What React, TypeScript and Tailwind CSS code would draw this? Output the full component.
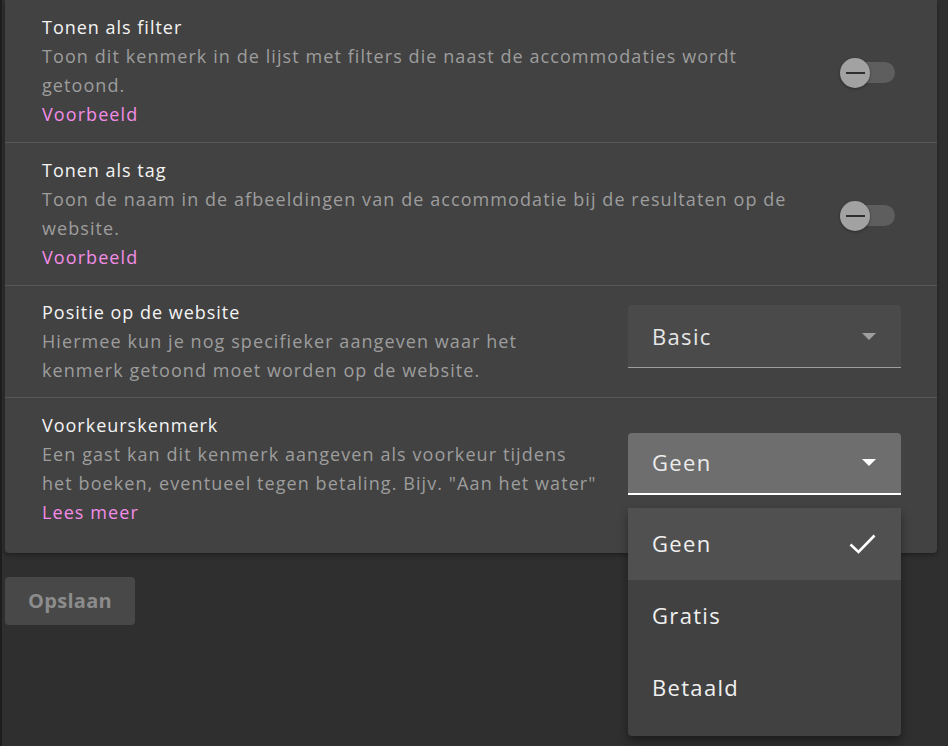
import { useState } from 'react';

const FONT = "font-['Open_Sans',sans-serif]";

function Toggle() {
  return (
    <div className="relative h-[30px] w-[55px] shrink-0">
      <div className="absolute right-0 top-[4px] h-[21px] w-[50px] rounded-full bg-[#5e5e5e]" />
      <div className="absolute left-0 top-0 flex h-[30px] w-[30px] items-center justify-center rounded-full bg-[#a2a2a2] shadow-[0_1px_3px_rgba(0,0,0,0.35)]">
        <div className="h-[2px] w-[19px] bg-[#2e2e2e]" />
      </div>
    </div>
  );
}

function Arrow({ light }: { light?: boolean }) {
  return (
    <svg width="14" height="7" viewBox="0 0 14 7" className="shrink-0">
      <path d="M0 0 L14 0 L7 7 Z" fill={light ? '#ffffff' : '#9e9e9e'} />
    </svg>
  );
}

function Row({
  title,
  lines,
  link,
  children,
  last,
  tight,
}: {
  title: string;
  lines: string[];
  link?: string;
  children: React.ReactNode;
  last?: boolean;
  tight?: boolean;
}) {
  return (
    <div
      className={`flex items-center pl-[37px] pr-[36px] ${tight ? 'pt-[12px] pb-[12px]' : 'py-[13px]'} ${last ? '' : 'border-b border-[#575757]'}`}
    >
      <div className="flex-1 text-[18px] leading-[29px] tracking-[0.06em]">
        <div className="font-medium tracking-[0.055em] text-[#f4f4f4]">{title}</div>
        <div className="text-[#9d9d9d]">
          {lines.map((l, i) => (
            <span key={i}>
              {l}
              {i < lines.length - 1 && <br />}
            </span>
          ))}
        </div>
        {link && <div className="text-[#f28ce6]">{link}</div>}
      </div>
      {children}
    </div>
  );
}

export default function App() {
  const [value] = useState('Geen');
  const options = ['Geen', 'Gratis', 'Betaald'];

  return (
    <div className={`h-[746px] w-[948px] overflow-hidden border-l-2 border-[#1d1d1d] bg-[#2f2f2f] pl-[3px] ${FONT}`}>
      <div className="w-[932px] rounded-b-[4px] bg-[#424242] pb-[13px] shadow-[0_2px_4px_rgba(0,0,0,0.35)]">
        <Row
          title="Tonen als filter"
          lines={['Toon dit kenmerk in de lijst met filters die naast de accommodaties wordt', 'getoond.']}
          link="Voorbeeld"
        >
          <div className="mr-[6px] mt-[3px]">
            <Toggle />
          </div>
        </Row>
        <Row
          title="Tonen als tag"
          lines={['Toon de naam in de afbeeldingen van de accommodatie bij de resultaten op de', 'website.']}
          link="Voorbeeld"
        >
          <div className="mr-[6px] mt-[3px]">
            <Toggle />
          </div>
        </Row>
        <Row
          title="Positie op de website"
          lines={['Hiermee kun je nog specifieker aangeven waar het', 'kenmerk getoond moet worden op de website.']}
          tight
        >
          <div className="mb-[10px] flex h-[63px] w-[273px] items-center justify-between rounded-t-[4px] border-b border-[#9e9e9e] bg-[#4a4a4a] pl-[24px] pr-[25px]">
            <span className="text-[22px] tracking-[0.06em] text-[#e6e6e6]">Basic</span>
            <Arrow />
          </div>
        </Row>
        <Row
          title="Voorkeurskenmerk"
          lines={['Een gast kan dit kenmerk aangeven als voorkeur tijdens', 'het boeken, eventueel tegen betaling. Bijv. "Aan het water"']}
          link="Lees meer"
          last
        >
          <div className="relative mb-[11px]">
            <div className="flex h-[62px] w-[273px] items-center justify-between rounded-t-[4px] border-b-2 border-white bg-[#6e6e6e] pl-[24px] pr-[25px]">
              <span className="text-[22px] tracking-[0.06em] text-[#ececec]">{value}</span>
              <Arrow light />
            </div>
            <div className="absolute left-0 top-[75px] z-10 w-[273px] rounded-[4px] bg-[#414141] pb-[12px] shadow-[0_5px_10px_rgba(0,0,0,0.4)]">
              {options.map((o) => (
                <div
                  key={o}
                  className={`flex h-[72px] items-center justify-between pl-[24px] pr-[25px] text-[22px] tracking-[0.06em] text-[#f0f0f0] ${o === value ? 'bg-[#505050]' : ''}`}
                >
                  <span>{o}</span>
                  {o === value && (
                    <svg width="27" height="20" viewBox="0 0 27 20">
                      <path d="M1.5 10.5 L9.5 18 L25.5 1.5" fill="none" stroke="#ffffff" strokeWidth="2.6" />
                    </svg>
                  )}
                </div>
              ))}
            </div>
          </div>
        </Row>
      </div>
      <button className="mt-[24px] flex h-[48px] w-[130px] items-center justify-center rounded-[4px] bg-[#484848] text-[20px] font-bold tracking-[0.015em] text-[#8c8c8c]">
        Opslaan
      </button>
    </div>
  );
}
